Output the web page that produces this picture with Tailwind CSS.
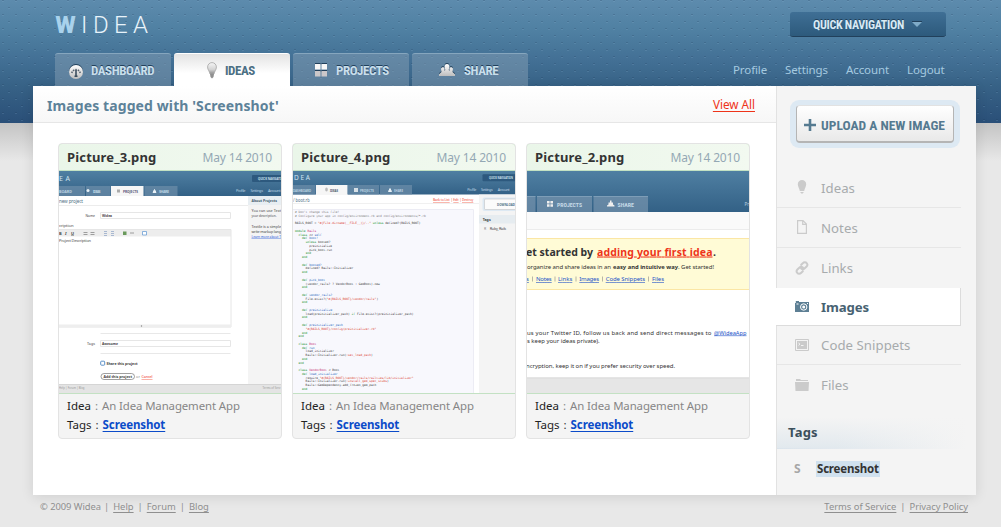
<!DOCTYPE html>
<html lang="en">
<head>
<meta charset="utf-8">
<title>Widea</title>
<script src="https://cdn.jsdelivr.net/npm/@tailwindcss/browser@4"></script>
</head>
<body class="relative h-[527px] overflow-hidden bg-[#e8e8e8] bg-[linear-gradient(#c4c4c4,#e8e8e8)] bg-[length:100%_38px] bg-[position:0_123px] bg-no-repeat font-['Noto_Sans','Lucida_Grande',sans-serif] text-[12px] text-[#333]">

<!-- Blue backdrop with dimple texture -->
<svg class="absolute left-0 top-0 -z-10" width="1001" height="123">
  <defs>
    <linearGradient id="sky" x2="0" y2="1"><stop offset="0" stop-color="#5d8bad"/><stop offset=".25" stop-color="#4f80a2"/><stop offset=".5" stop-color="#426f94"/><stop offset=".7" stop-color="#376286"/><stop offset="1" stop-color="#2a4f78"/></linearGradient>
    <pattern id="dots" width="13" height="14" patternUnits="userSpaceOnUse">
      <rect x="2" y="0" width="2" height="1" fill="#17334f" opacity=".2"/><rect x="2" y="1" width="2" height="1" fill="#9cc4e0" opacity=".16"/>
      <rect x="8" y="7" width="2" height="1" fill="#17334f" opacity=".2"/><rect x="8" y="8" width="2" height="1" fill="#9cc4e0" opacity=".16"/>
    </pattern>
    <linearGradient id="silver" x2="0" y2="1"><stop offset="0" stop-color="#fff"/><stop offset="1" stop-color="#bdbdbd"/></linearGradient>
    <linearGradient id="bulb" x2="0" y2="1"><stop offset="0" stop-color="#f6f6f6"/><stop offset=".6" stop-color="#d4d4d4"/><stop offset="1" stop-color="#8c8c8c"/></linearGradient>
    <linearGradient id="hd" x2="0" y2="1"><stop offset="0" stop-color="#4f7fa2"/><stop offset="1" stop-color="#336186"/></linearGradient>
  </defs>
  <rect width="1001" height="123" fill="url(#sky)"/>
  <rect width="1001" height="123" fill="url(#dots)"/>
</svg>

<header class="flex h-[86px] flex-col justify-between pl-[55px] pr-[55px]">
  <div class="flex h-[38px] items-end justify-between">
    <svg width="96" height="28" font-family="Roboto" font-size="24">
      <text x="0" y="23" font-weight="700" fill="#a9d2ec" textLength="21" lengthAdjust="spacingAndGlyphs" font-family="Roboto Condensed">W</text>
      <text y="23" font-weight="300" fill="#e8f3fa"><tspan x="26">I</tspan><tspan x="38">D</tspan><tspan x="59">E</tspan><tspan x="78">A</tspan></text>
    </svg>
    <div class="mb-[1px] flex h-[25px] w-[156px] items-center rounded-[3px] border-b border-[#21405b] bg-linear-to-b from-[#3f6f95] to-[#2d5a7c] pl-[23px] pt-[2px]">
      <span class="w-[90px] whitespace-nowrap font-['Roboto_Condensed'] text-[12px] font-bold tracking-[-0.3px] text-[#d8eaf5] [text-shadow:0_-1px_0_#21405b]">QUICK NAVIGATION</span>
      <svg class="-mt-[3px] ml-[9px]" width="10" height="6"><path d="M0 1h10L5 6z" fill="#7fabc8"/><path d="M0 .5h10" stroke="#21405b"/></svg>
    </div>
  </div>
  <div class="flex items-end justify-between">
    <nav class="flex gap-[3px] font-['Roboto_Condensed'] text-[13px] font-bold tracking-[-0.45px] text-[#c9dfec] [&>div]:flex [&>div]:h-[33px] [&>div]:w-[116px] [&>div]:items-center [&>div]:rounded-t-[3px] [&>div]:border-t [&>div]:pt-[2px] [&_svg]:shrink-0">
      <div class="border-[#86a6be] bg-[#8ba3b8]/45 pl-[14px] [text-shadow:0_-1px_0_#21405b]">
        <svg width="14" height="15"><circle cx="7" cy="7" r="7" fill="#21405b"/><circle cx="7" cy="8" r="7" fill="url(#silver)"/><path d="M2.800 9A4.300 4.300 0 0 1 11.200 9" fill="none" stroke="#56636f" stroke-width="1.600" stroke-dasharray="1.500 1"/><path d="M7 6v6M5.500 12.300h3" stroke="#3b4e5e" stroke-width="1.600"/></svg>
        <span class="ml-2">DASHBOARD</span>
      </div>
      <div class="border-white bg-linear-to-b from-[#e3e3e3] to-white to-60% pl-[33px] text-[#4c6f84]">
        <svg width="10" height="17" class="-mt-[2px]"><path d="M5 .6A4.400 4.400 0 0 1 9.400 5C9.400 8 7.500 9 7 12H3C2.500 9 .6 8 .6 5A4.400 4.400 0 0 1 5 .6z" fill="url(#bulb)" stroke="#a5a5a5" stroke-width=".8"/><path d="M3 12h4l-.5 3L5 16.500 3.500 15z" fill="#8f8f8f"/></svg>
        <span class="ml-2">IDEAS</span>
      </div>
      <div class="border-[#86a6be] bg-[#8ba3b8]/45 pl-[22px] [text-shadow:0_-1px_0_#21405b]">
        <svg width="12" height="14" class="-mt-[3px]"><path d="M0 0h5.500v2H0zM6.500 0H12v2H6.500zM0 7h5.500v2H0zM6.500 7H12v2H6.500z" fill="#21405b"/><path d="M0 1h5.500v5.500H0zM6.500 1H12v5.500H6.500z" fill="#f7f7f7"/><path d="M0 8h5.500v5.500H0zM6.500 8H12v5.500H6.500z" fill="#cbc7c9"/></svg>
        <span class="ml-[9px]">PROJECTS</span>
      </div>
      <div class="border-[#86a6be] bg-[#8ba3b8]/45 pl-[27px] [text-shadow:0_-1px_0_#21405b]">
        <svg width="16" height="13" class="-mt-[3px]" viewBox="0 0 16 13"><path d="M8 0C10 0 10.700 1.600 10.300 3.500L9.700 6 10.500 7V4.500C10.500 2.600 14 2.600 14 5L13.500 8 16 10.200V12H0V10.200L2.500 8 2 5C2 2.600 5.500 2.600 5.500 4.500V7L6.300 6 5.700 3.500C5.300 1.600 6 0 8 0z" fill="#21405b"/><path transform="translate(0 1)" d="M8 0C10 0 10.700 1.600 10.300 3.500L9.700 6 10.500 7V4.500C10.500 2.600 14 2.600 14 5L13.500 8 16 10.200V12H0V10.200L2.500 8 2 5C2 2.600 5.500 2.600 5.500 4.500V7L6.300 6 5.700 3.500C5.300 1.600 6 0 8 0z" fill="url(#silver)"/></svg>
        <span class="ml-[9px]">SHARE</span>
      </div>
    </nav>
    <nav class="mb-[7px] mr-[1px] flex text-[11.5px] leading-[18px] tracking-[-0.1px] text-[#a5cae0]">
      <a class="w-[52px]">Profile</a><a class="w-[61px]">Settings</a><a class="w-[61px]">Account</a><a class="w-[38px]">Logout</a>
    </nav>
  </div>
</header>

<div class="ml-[33px] flex h-[409px] w-[943px] bg-white shadow-[0_2px_12px_rgba(0,0,0,0.11)]">
  <main class="w-[743px]">
    <div class="flex h-[37px] items-center justify-between border-b border-[#e6e6e6] bg-linear-to-b from-white to-[#f7f7f7] pl-[14px] pr-[21px] pt-[2px]">
      <h1 class="text-[14px] font-bold tracking-[0.1px] text-[#5d8299]">Images tagged with 'Screenshot'</h1>
      <a class="text-[11.7px] text-[#ee3319] underline underline-offset-2">View All</a>
    </div>
    <div class="flex gap-[10px] pl-[25px] pt-[20px]">

      <article class="h-[296px] w-[224px] overflow-hidden rounded-[4px] border border-[#e3e3e3] bg-[#f4f4f4]">
        <div class="-mx-px -mt-px flex h-[28px] items-center justify-between rounded-t-[4px] border border-[#c3e1c3] bg-linear-to-r from-[#eaf6e9] to-[#f2f9f0] px-[8px] pr-[9px] pt-px">
          <h2 class="text-[13px] font-bold tracking-[0.16px]">Picture_3.png</h2><span class="tracking-[-0.15px] text-[#94a8b4]">May 14 2010</span>
        </div>
        <div class="-mx-px h-[223px] w-[224px] overflow-hidden border-x border-b border-[#c3e1c3] bg-white">
          <svg width="222" height="222" font-family="Noto Sans" font-size="4.2" fill="#444">
            <rect width="222" height="25" fill="url(#hd)"/>
            <text x="0" y="9.500" font-size="7" fill="#cfe3f0" textLength="11">EA</text>
            <path d="M0 15h26v10H0zM27 15h24.500v10H27zM85.500 15h33v10h-33z" fill="#6b8ca8" opacity=".75"/>
            <path d="M52 15h32.500v10H52z" fill="#f6f6f6"/>
            <g font-size="3.700" fill="#bcd3e2" font-weight="700"><text y="21.700" textLength="13">BOARD</text><text x="34" y="21.700" textLength="7.500">IDEAS</text><text x="64" y="21.700" textLength="15" fill="#557" lengthAdjust="spacingAndGlyphs">PROJECTS</text><text x="100" y="21.700" textLength="10">SHARE</text></g>
            <circle cx="29" cy="19.500" r="1.500" fill="#e8f1f7"/><path d="M58 18.500h3v3h-3z" fill="#aaa"/><path d="M94 21.500l1.500-3 1.500 3z" stroke="#e8f1f7" fill="#e8f1f7"/>
            <rect x="193" y="4" width="32" height="7" rx="1" fill="#2d597e"/><text x="199" y="8.800" font-size="3.500" font-weight="700" fill="#cfe3f0" textLength="23" lengthAdjust="spacingAndGlyphs">QUICK NAVIGATI</text>
            <g fill="#bcd3e2" font-size="3.800"><text x="177" y="21.200" textLength="9.500">Profile</text><text x="191.500" y="21.200" textLength="12.500">Settings</text><text x="209" y="21.200" textLength="12.500">Account</text></g>
            <text y="31.800" font-size="4.600" fill="#4f7086" textLength="24">new project</text>
            <path d="M0 34.500h189" stroke="#ececec"/>
            <rect x="189" y="25" width="33" height="188" fill="#f4f4f4"/><rect x="189" y="25" width="33" height="9" fill="#e8eef2"/>
            <text x="192.500" y="31" font-weight="700" fill="#45606f" textLength="25.500" lengthAdjust="spacingAndGlyphs">About Projects</text>
            <g font-size="3.700"><text x="192.500" y="41" textLength="29.500">You can use Text</text><text x="192.500" y="46" textLength="25" lengthAdjust="spacingAndGlyphs">your description.</text><text x="192.500" y="56.500" textLength="29.500">Textile is a simple</text><text x="192.500" y="61.500" textLength="29.500">write markup lang</text><text x="192.500" y="66.500" fill="#2454d8" text-decoration="underline" textLength="29.500" lengthAdjust="spacingAndGlyphs">Learn more about T</text></g>
            <text x="26.500" y="45.700" font-size="3.700" textLength="9.500" lengthAdjust="spacingAndGlyphs">Name</text><path d="M41.500 41.500h130v6h-130z" fill="none" stroke="#e6e6e6"/><text x="43" y="45.900" font-size="3.900" font-weight="700" textLength="10" lengthAdjust="spacingAndGlyphs">Widea</text>
            <text y="56" textLength="14.500">cription</text>
            <rect y="58.500" width="172" height="7" fill="#ededed"/><path d="M-1 58.500H172V156H-1" fill="none" stroke="#e6e6e6"/>
            <g font-weight="700" font-size="4"><text x="0" y="63.500">B</text><text x="6" y="63.500" font-style="italic">I</text><text x="12" y="63.500" text-decoration="underline">U</text></g>
            <path d="M24.500 61.500h4M31.500 61.500h4M24.500 63.500h4M31.500 63.500h4M71 62h4" stroke="#888" stroke-width=".8"/><path d="M45 60.500h3M45 62.500h3M45 64.500h3M52 60.500h3M52 62.500h3M52 64.500h3" stroke="#8aa0c4" stroke-width=".7"/><path d="M64 60.500h3.500v3.500H64z" fill="#6a9a5c"/><path d="M83.500 60.500h4v3.500h-4z" fill="#fff" stroke="#5b95d3" stroke-width=".7"/>
            <text x="0" y="70.800" font-size="3.900" textLength="32">Project Description</text>
            <path d="M0 153.500h172v3H0z" fill="#eee"/><circle cx="82.500" cy="155" r=".7" fill="#888"/>
            <path d="M41.500 162.500h130M41.500 182.500h130" stroke="#e8e8e8"/>
            <text x="28" y="174" font-size="3.700" textLength="8">Tags</text><path d="M41.500 169.500h130v6h-130z" fill="none" stroke="#e6e6e6"/><text x="43" y="173.800" font-size="3.800" font-weight="700" textLength="16" lengthAdjust="spacingAndGlyphs">Awesome</text>
            <rect x="41.700" y="190.200" width="4" height="4" rx=".8" fill="none" stroke="#4b86c2" stroke-width=".9"/><text x="47.500" y="193.800" font-size="3.900" font-weight="700" textLength="31" lengthAdjust="spacingAndGlyphs">Share this project</text>
            <rect x="42" y="202.500" width="33.500" height="6" rx="3" fill="#fff" stroke="#777" stroke-width=".7"/><text x="44.500" y="207" font-size="3.700" font-weight="700" textLength="28.500" lengthAdjust="spacingAndGlyphs">Add this project</text><text x="77" y="207" font-size="3.700" fill="#777" textLength="4">or</text><text x="82.500" y="207" font-size="3.700" fill="#ee3319" text-decoration="underline" textLength="11">Cancel</text>
            <rect y="213" width="222" height="9" fill="#e4e4e4"/><path d="M0 213.500h222" stroke="#d5d5d5"/>
            <g fill="#999" font-size="3.400"><text x="0" y="218.400" textLength="25.500" lengthAdjust="spacingAndGlyphs">Help | Forum | Blog</text><text x="203.500" y="218.400" textLength="18" lengthAdjust="spacingAndGlyphs">Terms of Serv</text></g>
          </svg>
        </div>
        <div class="px-[8px] pt-[2px] text-[11.5px] leading-[19px]">
          <p class="flex gap-[4px] whitespace-nowrap text-[#868686]"><span class="text-[#222]">Idea</span><span>:</span><span class="text-[11.4px] tracking-[-0.1px]">An Idea Management App</span></p>
          <p class="flex gap-[4px] whitespace-nowrap"><span class="text-[#222]">Tags</span><span>:</span><a class="font-bold tracking-[-0.12px] text-[#0b4bc9] underline underline-offset-2">Screenshot</a></p>
        </div>
      </article>

      <article class="h-[296px] w-[224px] overflow-hidden rounded-[4px] border border-[#e3e3e3] bg-[#f4f4f4]">
        <div class="-mx-px -mt-px flex h-[28px] items-center justify-between rounded-t-[4px] border border-[#c3e1c3] bg-linear-to-r from-[#eaf6e9] to-[#f2f9f0] px-[8px] pr-[9px] pt-px">
          <h2 class="text-[13px] font-bold tracking-[0.16px]">Picture_4.png</h2><span class="tracking-[-0.15px] text-[#94a8b4]">May 14 2010</span>
        </div>
        <div class="-mx-px grid h-[223px] w-[224px] overflow-hidden border-x border-b border-[#c3e1c3] bg-white">
          <svg class="col-start-1 row-start-1" width="222" height="222" font-family="Noto Sans" font-size="4" fill="#444">
            <rect width="222" height="23.500" fill="url(#hd)"/>
            <text x="1" y="9" font-size="6.500" fill="#cfe3f0" textLength="16">DEA</text>
            <path d="M0 14h22.500v9.500H0zM55 14h31v9.500H55zM87 14h32v9.500H87z" fill="#6b8ca8" opacity=".75"/><path d="M23 14h31.500v10H23z" fill="#f6f6f6"/>
            <g font-size="3.600" font-weight="700" fill="#bcd3e2"><text x="0" y="20.500" textLength="18" lengthAdjust="spacingAndGlyphs">DASHBOARD</text><text x="37" y="20.500" fill="#456" textLength="8" lengthAdjust="spacingAndGlyphs">IDEAS</text><text x="67" y="20.500" textLength="14" lengthAdjust="spacingAndGlyphs">PROJECTS</text><text x="101" y="20.500" textLength="9" lengthAdjust="spacingAndGlyphs">SHARE</text></g>
            <ellipse cx="33.500" cy="18.500" rx="1.300" ry="2" fill="#bbb"/><path d="M61 17h4v4h-4z" fill="#d5dfe6"/><path d="M95.500 20.500l1.500-3 1.500 3z" stroke="#e8f1f7" fill="#e8f1f7"/>
            <rect x="189.500" y="3.300" width="34" height="7" rx="1" fill="#2d597e"/><text x="196" y="8.200" font-size="3.400" font-weight="700" fill="#cfe3f0" textLength="24" lengthAdjust="spacingAndGlyphs">QUICK NAVIGATION</text>
            <g fill="#bcd3e2" font-size="3.700"><text x="174.300" y="20.300" textLength="9">Profile</text><text x="188" y="20.300" textLength="11.700">Settings</text><text x="204.700" y="20.300" textLength="12">Account</text></g>
            <text y="30.500" font-size="4.400" fill="#4f7086" textLength="16.700" lengthAdjust="spacingAndGlyphs">/ boot.rb</text>
            <g fill="#ee3319" font-size="3.500"><text x="140" y="30" text-decoration="underline" textLength="16.700" lengthAdjust="spacingAndGlyphs">Back to List</text><text x="157.800" y="30">|</text><text x="160.300" y="30" text-decoration="underline" textLength="5.300" lengthAdjust="spacingAndGlyphs">Edit</text><text x="166.600" y="30">|</text><text x="169" y="30" text-decoration="underline" textLength="11.300" lengthAdjust="spacingAndGlyphs">Destroy</text></g>
            <path d="M0 32.500h186" stroke="#f0f0f0"/>
            <path d="M-1 38.500H180.500V224H-1z" fill="#f8f8fd" stroke="#ececf4"/>
            <rect x="186" y="23.500" width="36" height="199" fill="#f4f4f4"/>
            <rect x="189.500" y="26.500" width="40" height="13.500" rx="2" fill="#dde9f3"/><rect x="191.500" y="28" width="40" height="10.500" rx="1" fill="#fbfbfb" stroke="#bbb" stroke-width=".5"/>
            <text x="204" y="35" font-size="3.900" font-weight="700" fill="#4f7086" textLength="18" lengthAdjust="spacingAndGlyphs">DOWNLOAD</text>
            <rect x="186" y="44" width="36" height="8.500" fill="#e6ecf0"/><text x="189.700" y="49.700" font-weight="700" textLength="8" lengthAdjust="spacingAndGlyphs">Tags</text>
            <text x="191" y="59" font-size="3.500" fill="#888">R</text><text x="196.700" y="59" font-size="3.800" textLength="16.500">Ruby, Rails</text>
          </svg>
          <pre class="col-start-1 row-start-1 pl-[2px] pt-[40px] font-['DejaVu_Sans_Mono',monospace] text-[2.94px] leading-[3.77px] text-[#333] [&_b]:font-normal [&_b]:text-[#0a8a1a] [&_i]:not-italic [&_i]:text-[#1458b8] [&_s]:text-[#d83a2a] [&_s]:no-underline [&_u]:text-[#c21d6c] [&_u]:no-underline"><em class="not-italic text-[#777]"># Don't change this file!
# Configure your app in config/environment.rb and config/environments/*.rb</em>

RAILS_ROOT = <s>"#{File.dirname(__FILE__)}/.."</s> <b>unless</b> defined?(RAILS_ROOT)

<b>module</b> <u>Rails</u>
  <b>class</b> &lt;&lt; <i>self</i>
    <b>def</b> <i>boot!</i>
      <b>unless</b> booted?
        preinitialize
        pick_boot.run
      <b>end</b>
    <b>end</b>

    <b>def</b> <i>booted?</i>
      defined? Rails::Initializer
    <b>end</b>

    <b>def</b> <i>pick_boot</i>
      (vendor_rails? ? VendorBoot : GemBoot).new
    <b>end</b>

    <b>def</b> <i>vendor_rails?</i>
      File.exist?(<s>"#{RAILS_ROOT}/vendor/rails"</s>)
    <b>end</b>

    <b>def</b> <i>preinitialize</i>
      load(preinitializer_path) <b>if</b> File.exist?(preinitializer_path)
    <b>end</b>

    <b>def</b> <i>preinitializer_path</i>
      <s>"#{RAILS_ROOT}/config/preinitializer.rb"</s>
    <b>end</b>
  <b>end</b>

  <b>class</b> <u>Boot</u>
    <b>def</b> <i>run</i>
      load_initializer
      Rails::Initializer.run(<s>:set_load_path</s>)
    <b>end</b>
  <b>end</b>

  <b>class</b> <u>VendorBoot</u> &lt; Boot
    <b>def</b> <i>load_initializer</i>
      require <s>"#{RAILS_ROOT}/vendor/rails/railties/lib/initializer"</s>
      Rails::Initializer.run(<s>:install_gem_spec_stubs</s>)
      Rails::GemDependency.add_frozen_gem_path
    <b>end</b></pre>
        </div>
        <div class="px-[8px] pt-[2px] text-[11.5px] leading-[19px]">
          <p class="flex gap-[4px] whitespace-nowrap text-[#868686]"><span class="text-[#222]">Idea</span><span>:</span><span class="text-[11.4px] tracking-[-0.1px]">An Idea Management App</span></p>
          <p class="flex gap-[4px] whitespace-nowrap"><span class="text-[#222]">Tags</span><span>:</span><a class="font-bold tracking-[-0.12px] text-[#0b4bc9] underline underline-offset-2">Screenshot</a></p>
        </div>
      </article>

      <article class="h-[296px] w-[224px] overflow-hidden rounded-[4px] border border-[#e3e3e3] bg-[#f4f4f4]">
        <div class="-mx-px -mt-px flex h-[28px] items-center justify-between rounded-t-[4px] border border-[#c3e1c3] bg-linear-to-r from-[#eaf6e9] to-[#f2f9f0] px-[8px] pr-[9px] pt-px">
          <h2 class="text-[13px] font-bold tracking-[0.16px]">Picture_2.png</h2><span class="tracking-[-0.15px] text-[#94a8b4]">May 14 2010</span>
        </div>
        <div class="-mx-px h-[223px] w-[224px] overflow-hidden border-x border-b border-[#c3e1c3] bg-white">
          <svg width="222" height="222" font-family="Noto Sans" font-size="6" fill="#333">
            <rect width="222" height="41" fill="url(#hd)"/>
            <path d="M0 25h8.500v16H0zM10 25h55v16H10zM66.500 25h54.500v16H66.500z" fill="#7d98b0" opacity=".65"/><path d="M0 25.500h8.500M10 25.500h55M66.500 25.500H121" stroke="#86a6be" stroke-width=".7"/>
            <g font-family="Roboto Condensed" font-weight="700" fill="#c5dae7"><text x="30" y="35.500" textLength="25" lengthAdjust="spacingAndGlyphs">PROJECTS</text><text x="90.500" y="35.500" textLength="16.500" lengthAdjust="spacingAndGlyphs">SHARE</text></g>
            <path d="M20 30h2.600v2.500H20zM23.400 30H26v2.500h-2.600zM20 33.300h2.600v2.500H20zM23.400 33.300H26v2.500h-2.600z" fill="#eee"/><path d="M80 35.500v-1l1.500-1v-2h1.500v-2h1.500v2H86v2l1.500 1v1z" fill="#eee"/>
            <text x="217.500" y="35" fill="#bcd3e2" font-size="4.500" textLength="4.500">Pr</text>
            <rect y="41" width="222" height="17" fill="#fafafa"/><path d="M0 58.500h222" stroke="#ececec"/>
            <rect y="67" width="222" height="52" fill="#fffbd6"/><path d="M0 67.500h222M0 118.500h222" stroke="#fbe6a4"/>
            <g font-size="10.500" font-weight="700"><text x="-1" y="84.500" textLength="67">et started by</text><text x="70" y="84.500" fill="#ee3319" text-decoration="underline" textLength="115.500">adding your first idea</text><text x="186" y="84.500">.</text></g>
            <text x="0" y="98.300" textLength="84">organize and share ideas in an</text><text x="86" y="98.300" font-weight="700" textLength="65" lengthAdjust="spacingAndGlyphs">easy and intuitive way</text><text x="151" y="98.300" textLength="36">. Get started!</text>
            <g fill="#2454c8" text-decoration="underline"><text x="-1" y="110">s</text><text x="9" y="110" textLength="15.700">Notes</text><text x="31" y="110" textLength="14.300">Links</text><text x="52.300" y="110" textLength="19.700">Images</text><text x="78.700" y="110" textLength="39.300">Code Snippets</text><text x="125" y="110" textLength="12">Files</text></g>
            <path d="M5.500 105.500v5M28 105.500v5M49 105.500v5M75.500 105.500v5M121.500 105.500v5" stroke="#888" stroke-width=".6"/>
            <text x="0" y="163.500" textLength="184.500">us your Twitter ID, follow us back and send direct messages to</text><text x="187" y="163.500" fill="#2454c8" text-decoration="underline" textLength="32.500" lengthAdjust="spacingAndGlyphs">@WideaApp</text>
            <text x="0" y="172" textLength="72.700">s keep your ideas private).</text>
            <text x="-1" y="197" textLength="149">ncryption, keep it on if you prefer security over speed.</text>
            <rect y="206.500" width="222" height="16" fill="#e6e6e6"/><path d="M0 207h222" stroke="#d9d9d9"/>
          </svg>
        </div>
        <div class="px-[8px] pt-[2px] text-[11.5px] leading-[19px]">
          <p class="flex gap-[4px] whitespace-nowrap text-[#868686]"><span class="text-[#222]">Idea</span><span>:</span><span class="text-[11.4px] tracking-[-0.1px]">An Idea Management App</span></p>
          <p class="flex gap-[4px] whitespace-nowrap"><span class="text-[#222]">Tags</span><span>:</span><a class="font-bold tracking-[-0.12px] text-[#0b4bc9] underline underline-offset-2">Screenshot</a></p>
        </div>
      </article>
    </div>
  </main>

  <aside class="w-[200px] border-l border-[#e2e2e2] bg-[#f4f4f4]">
    <div class="ml-[13px] mt-[14px] h-[48px] w-[170px] rounded-[9px] bg-[#dde9f3] px-[6px] pt-[5px]">
      <div class="flex h-[38px] items-center rounded-[4px] border border-b-2 border-[#b5b5b5] border-t-[#e2e2e2] bg-linear-to-b from-white to-[#e9e9e9] pl-[7px] pt-[3px] text-[#557a90]">
        <svg class="-mt-px" width="12" height="12"><path d="M6 0v12M0 6h12" stroke="currentColor" stroke-width="2.600"/></svg>
        <span class="ml-[5px] whitespace-nowrap font-['Roboto_Condensed'] text-[13.5px] font-bold">UPLOAD A NEW IMAGE</span>
      </div>
    </div>
    <ul class="mt-[20px] w-[184px] text-[13.2px] tracking-[0.05px] text-[#a7abad] [&>li]:flex [&>li]:h-[40px] [&>li]:items-center [&>li]:pl-[18px] [&>li]:pt-[2px] [&_svg]:-mt-[3px] [&_svg]:mr-[12px] [&_svg]:shrink-0">
      <li class="border-b border-[#e6e6e6]"><svg width="14" height="14" fill="#cbcbcb"><path d="M7 0a4.200 4.200 0 0 1 4.200 4.200C11.200 6.500 9.700 8 9.200 11H4.800C4.300 8 2.800 6.500 2.800 4.200A4.200 4.200 0 0 1 7 0zM5 12h4L7 14z"/></svg>Ideas</li>
      <li class="border-b border-[#e6e6e6]"><svg width="14" height="14" fill="none" stroke="#cbcbcb" stroke-width="1.200"><path d="M2.600.6h5.400l3.400 3.400v9.400H2.600zM7.700.6v3.700h3.700"/></svg>Notes</li>
      <li><svg width="14" height="14" viewBox="0 0 14 14" fill="none" stroke="#cbcbcb" stroke-width="2" stroke-linecap="round"><path d="M6.200 3.700 8 2a2.500 2.500 0 0 1 3.700.2 2.400 2.400 0 0 1-.1 3.300L9.500 7.500A2.400 2.400 0 0 1 6.200 7.500M7.800 10.200 6 12a2.500 2.500 0 0 1-3.700-.2 2.400 2.400 0 0 1 .1-3.300L4.500 6.500A2.400 2.400 0 0 1 7.800 6.500"/></svg>Links</li>
      <li class="-ml-px h-[38px]! border-b border-r border-[#dcdcdc] bg-white pl-[19px]! font-bold tracking-[-0.1px] text-[#476272]"><svg width="14" height="11"><path d="M0 2h.8V0H4v1H14v10H0z" fill="#5d7f94"/><circle cx="8.700" cy="6" r="3.200" fill="none" stroke="#fff"/><circle cx="8.700" cy="6" r="1.500" fill="#fff"/><path d="M1.500 3h2M12 2.500h1" stroke="#fff"/></svg>Images</li>
      <li class="h-[39px]! border-b border-[#e6e6e6]"><svg width="14" height="12"><path d="M.5.5h13v11H.5z" fill="none" stroke="#cbcbcb"/><path d="M2 2h10v8H2z" fill="#cbcbcb"/><path d="M3.500 4 5 5.200 3.500 6.400M6 6.500h2.500" stroke="#f4f4f4" fill="none"/></svg>Code Snippets</li>
      <li><svg width="14" height="12" fill="#cbcbcb"><path d="M1 2V0h4l1 1h7v1zM0 3h14l-.5 9H.5z"/></svg>Files</li>
    </ul>
    <div class="mt-[12px] bg-linear-to-r from-[#dbe4ec] to-[#f4f4f4] to-95% pb-px">
      <h3 class="h-[31px] bg-[linear-gradient(#f4f4f4,transparent),linear-gradient(90deg,#e2e9ee_30%,#f4f4f4_95%)] pl-[11px] text-[13px] font-bold leading-[31px] tracking-[0.2px] text-[#3c505c]">Tags</h3>
    </div>
    <div class="flex h-[40px] items-center pl-[17px]"><b class="w-[22px] text-[#a7a7a7]">S</b><a class="bg-[#d0e1ef] px-[1px] text-[11.5px] font-bold leading-[16px] tracking-[-0.2px]">Screenshot</a></div>
  </aside>
</div>

<footer class="flex h-[32px] justify-between pl-[40px] pr-[33px] pt-[4px] text-[9.4px] leading-[16px] text-[#8f8f8f] [&_a]:underline [&_a]:underline-offset-2">
  <div class="flex gap-[4px]"><span class="tracking-[-0.05px]">© 2009 Widea</span><span class="-ml-px">|</span><a>Help</a><span>|</span><a>Forum</a><span>|</span><a>Blog</a></div>
  <div class="flex gap-[4px]"><a>Terms of Service</a><span>|</span><a class="tracking-[-0.05px]">Privacy Policy</a></div>
</footer>
</body>
</html>
